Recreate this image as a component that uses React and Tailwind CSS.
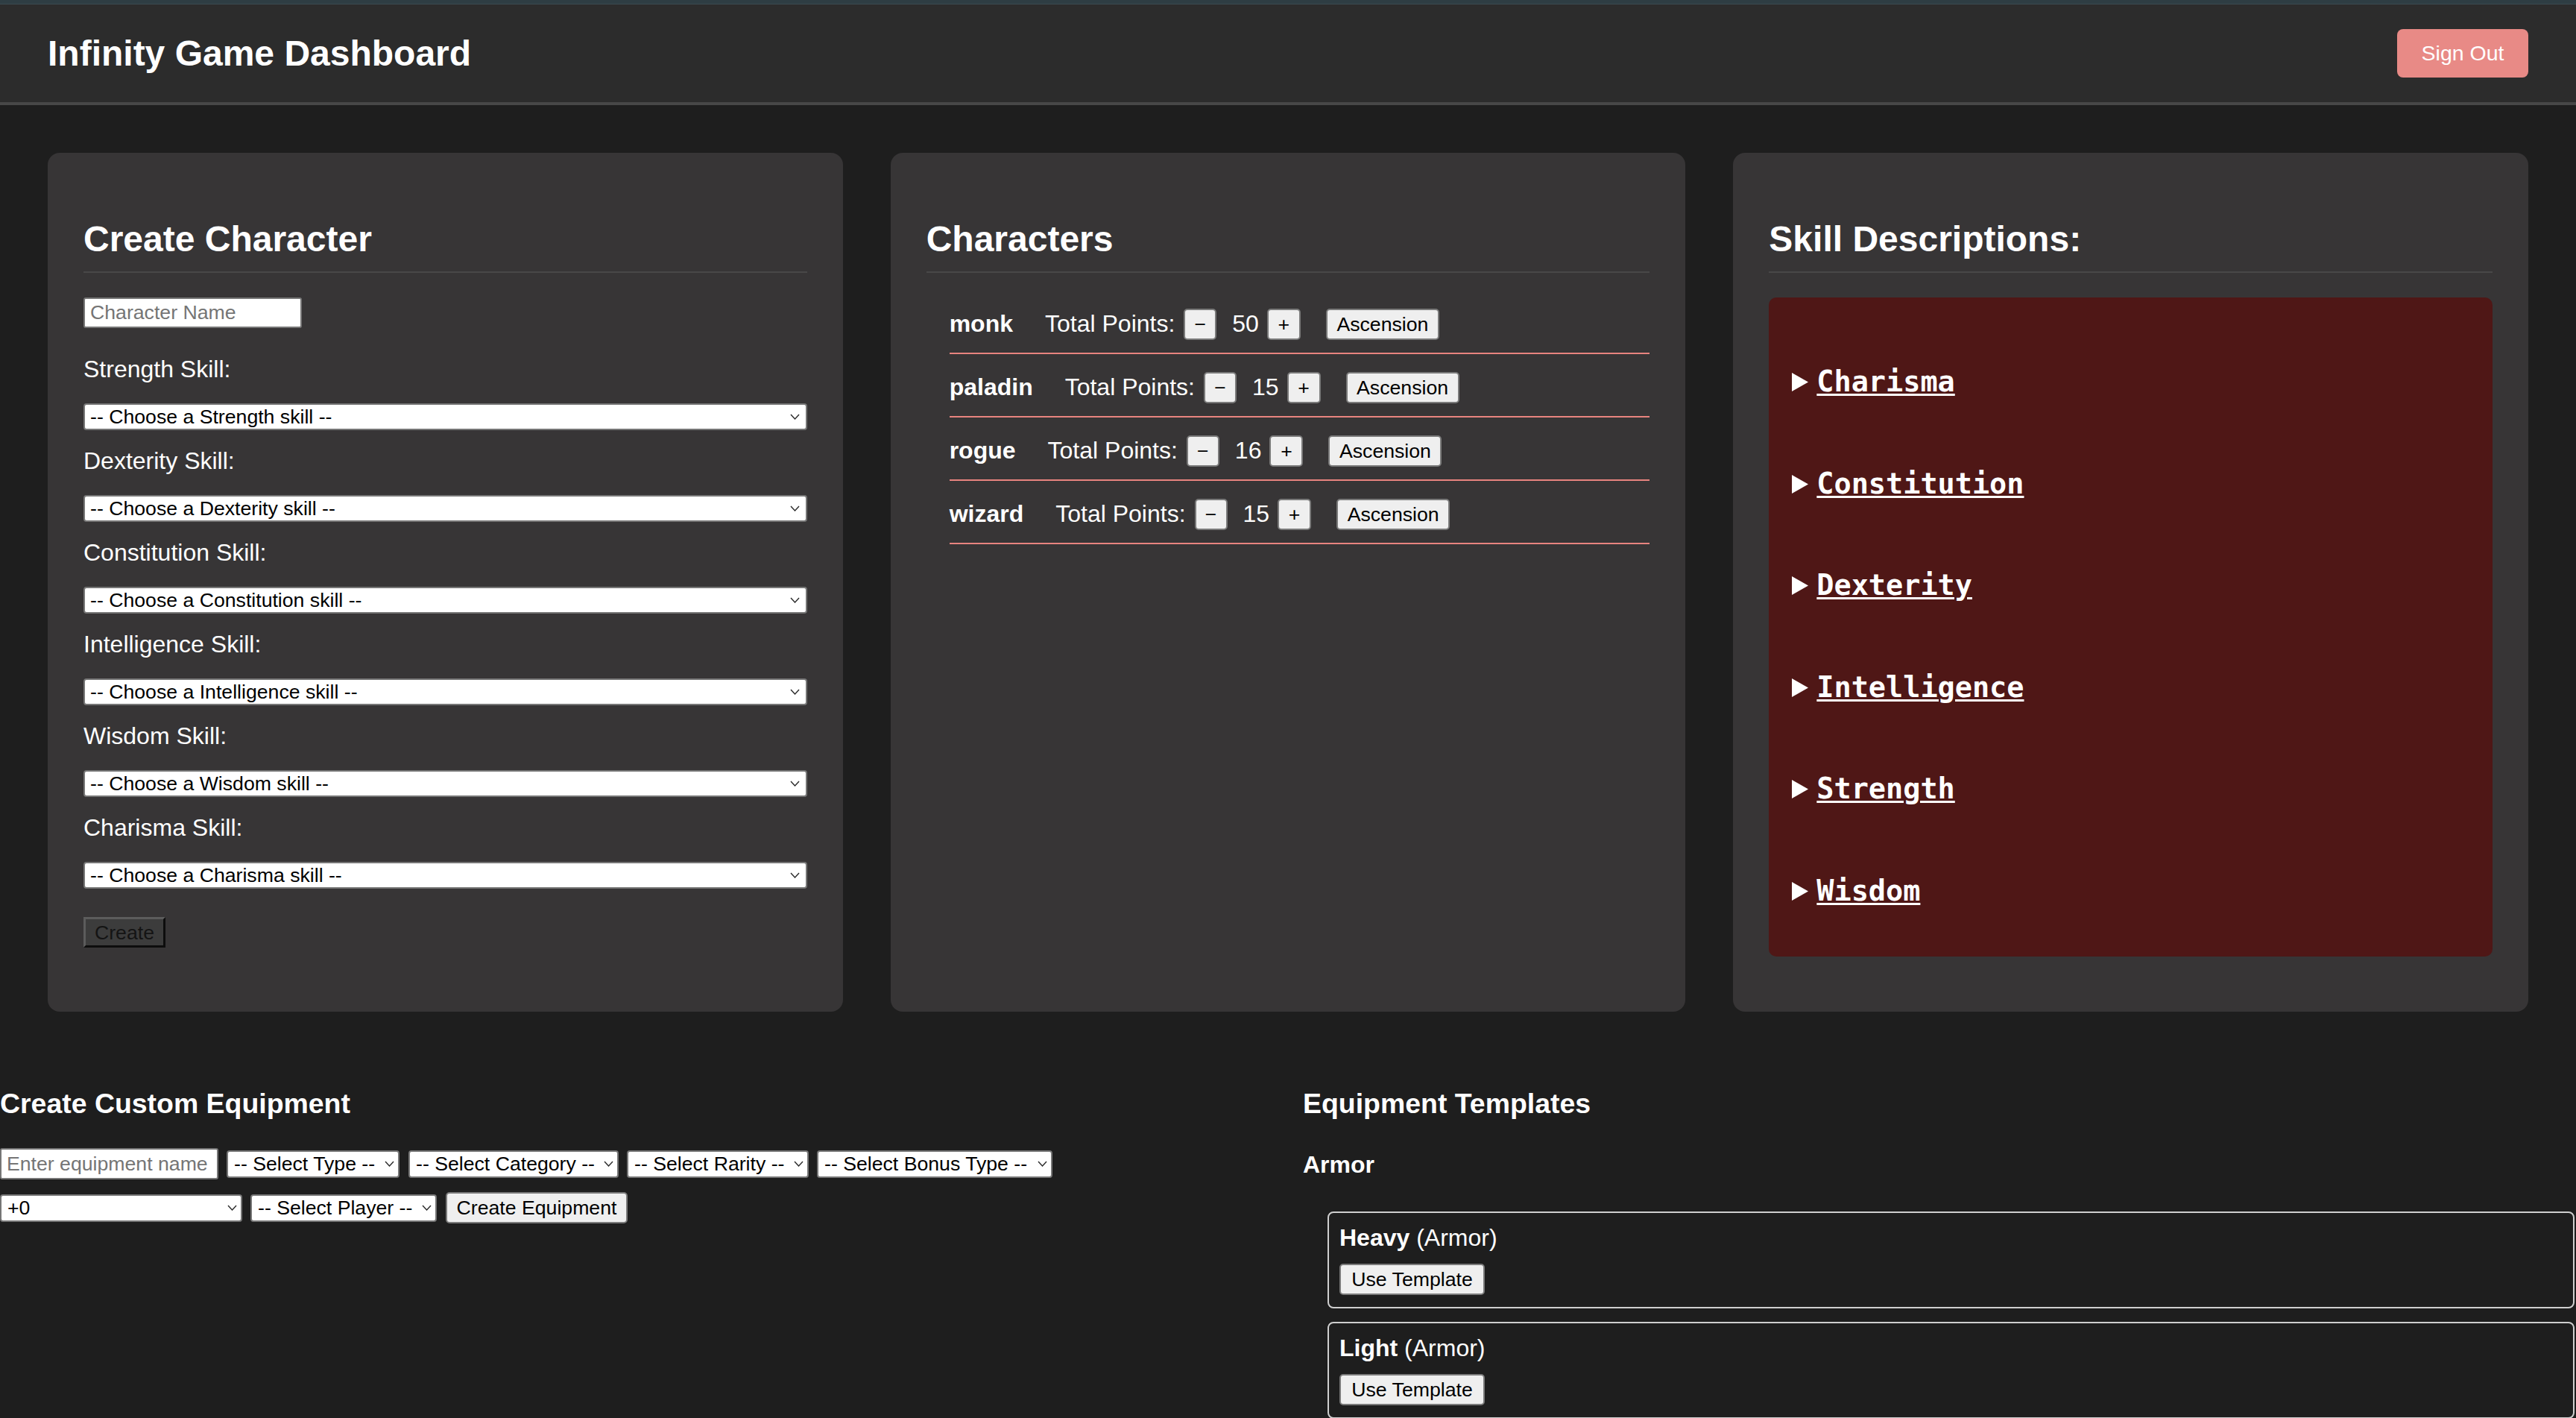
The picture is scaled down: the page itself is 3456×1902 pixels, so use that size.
import React from "react";

function Chevron({ pos }) {
  return (
    <svg
      className={"pointer-events-none absolute top-1/2 -translate-y-1/2 " + pos}
      width="13"
      height="8"
      viewBox="0 0 13 8"
      fill="none"
    >
      <path d="M1 1 L6.5 7 L12 1" stroke="#2a2a2a" strokeWidth="1.4" />
    </svg>
  );
}

function SkillSelect({ name }) {
  return (
    <div className="relative mt-[30px] h-[36px] w-full">
      <select
        defaultValue=""
        className="h-[36px] w-full appearance-none rounded-[4px] border-2 border-solid border-[#767676] bg-white py-0 pl-[7px] text-[26.67px] leading-[32px] text-black"
      >
        <option value="">{`-- Choose a ${name} skill --`}</option>
      </select>
      <Chevron pos="right-[10px]" />
    </div>
  );
}

function SmallSelect({ text, cls, chev }) {
  return (
    <div className={"relative h-[37px] shrink-0 " + cls}>
      <select
        defaultValue=""
        className="h-[37px] w-full appearance-none rounded-[4px] border-2 border-solid border-[#767676] bg-white py-0 pl-[8px] text-[26.67px] leading-[33px] text-black"
      >
        <option value="">{text}</option>
      </select>
      <Chevron pos={chev} />
    </div>
  );
}

function GrayButton({ children, cls }) {
  return (
    <button
      className={
        "flex shrink-0 items-center justify-center rounded-[5px] border-2 border-solid border-[#7a7a7a] bg-[#efefef] p-0 text-[26.67px] leading-[30px] text-black " +
        cls
      }
    >
      {children}
    </button>
  );
}

const characters = [
  { name: "monk", points: 50 },
  { name: "paladin", points: 15 },
  { name: "rogue", points: 16 },
  { name: "wizard", points: 15 },
];

const skills = ["Charisma", "Constitution", "Dexterity", "Intelligence", "Strength", "Wisdom"];

const skillLabels = ["Strength", "Dexterity", "Constitution", "Intelligence", "Wisdom", "Charisma"];

function CardTitle({ children }) {
  return (
    <h2 className="mt-[40px] border-b-2 border-solid border-[#484848] pb-[16px] text-[48px] font-bold leading-[55px] text-white">
      {children}
    </h2>
  );
}

export default function App() {
  return (
    <div className="min-h-screen bg-[#1e1e1e] font-['Liberation_Sans',Arial,sans-serif] text-white">
      <div className="h-[5px] bg-[#2e3d43]" />
      <div className="h-[1px] bg-[#3b4a50]" />
      <header className="flex h-[135px] items-center justify-between border-b-4 border-solid border-[#474747] bg-[#2c2c2c] px-[64px]">
        <h1 className="text-[48px] font-bold leading-[55px] text-white">Infinity Game Dashboard</h1>
        <button className="h-[65px] w-[176px] rounded-[8px] bg-[#e88a86] text-[28.5px] leading-[33px] text-white">
          Sign Out
        </button>
      </header>

      <main className="grid grid-cols-3 gap-[64px] px-[64px] pt-[64px] pb-[64px]">
        {/* Create Character */}
        <section className="min-h-[1152px] rounded-[16px] bg-[#373536] p-[48px]">
          <CardTitle>Create Character</CardTitle>
          <input
            placeholder="Character Name"
            className="mt-[33px] block h-[41px] w-[293px] rounded-[3px] border-2 border-solid border-[#767676] bg-white pl-[7px] text-[26.67px] text-black placeholder:text-[#757575]"
          />
          <div className="mt-[40px]">
            {skillLabels.map((s, i) => (
              <div key={s} className={i === 0 ? "" : "mt-[26px]"}>
                <label className="block text-[32px] leading-[31px] text-white">{s} Skill:</label>
                <SkillSelect name={s} />
              </div>
            ))}
          </div>
          <button className="mt-[38px] flex h-[41px] w-[110px] items-center justify-center border-[3px] border-solid border-t-[#5c5c5c] border-l-[#5c5c5c] border-r-[#0d0d0d] border-b-[#0d0d0d] bg-[#3c3c3c] text-[26.67px] text-[#141414]">
            Create
          </button>
        </section>

        {/* Characters */}
        <section className="min-h-[1152px] rounded-[16px] bg-[#373536] p-[48px]">
          <CardTitle>Characters</CardTitle>
          <ul className="mt-[24px] pl-[31px]">
            {characters.map((c) => (
              <li
                key={c.name}
                className="flex h-[85px] items-center border-b-2 border-solid border-[#e8847f] pt-[6px] text-[32px] leading-[37px] text-white"
              >
                <span className="font-bold">{c.name}</span>
                <span className="ml-[43px]">Total Points:</span>
                <GrayButton cls="ml-[12px] h-[42px] w-[44px]">−</GrayButton>
                <span className="ml-[21px]">{c.points}</span>
                <GrayButton cls="ml-[11px] h-[42px] w-[45px]">+</GrayButton>
                <GrayButton cls="ml-[34px] h-[42px] w-[152px]">Ascension</GrayButton>
              </li>
            ))}
          </ul>
        </section>

        {/* Skill Descriptions */}
        <section className="min-h-[1152px] rounded-[16px] bg-[#373536] p-[48px]">
          <CardTitle>Skill Descriptions:</CardTitle>
          <div className="mt-[33px] flex flex-col gap-[91.8px] rounded-[10px] bg-[#4f1716] pt-[91px] pb-[65px] pl-[31px]">
            {skills.map((s) => (
              <div key={s} className="flex items-baseline gap-[11px]">
                <svg width="22" height="25" viewBox="0 0 22 25" className="shrink-0">
                  <polygon points="0,0 22,12.5 0,25" fill="#ffffff" />
                </svg>
                <a
                  href="#"
                  className="font-['DejaVu_Sans_Mono',monospace] text-[38.5px] font-bold leading-[44.8px] text-white underline decoration-[3px] underline-offset-[3px]"
                >
                  {s}
                </a>
              </div>
            ))}
          </div>
        </section>
      </main>

      <div className="grid grid-cols-2 gap-[40px]">
        {/* Create Custom Equipment */}
        <section>
          <h3 className="mt-[38px] text-[37.44px] font-bold leading-[43px] text-white">Create Custom Equipment</h3>
          <div className="mt-[38px] flex items-center">
            <input
              placeholder="Enter equipment name"
              className="h-[42px] w-[293px] shrink-0 rounded-[3px] border-2 border-solid border-[#767676] bg-white pl-[7px] text-[26.67px] text-black placeholder:text-[#757575]"
            />
            <SmallSelect text="-- Select Type --" cls="ml-[11px] w-[232px]" chev="right-[7px]" />
            <SmallSelect text="-- Select Category --" cls="ml-[12px] w-[282px]" chev="right-[7px]" />
            <SmallSelect text="-- Select Rarity --" cls="ml-[11px] w-[244px]" chev="right-[7px]" />
            <SmallSelect text="-- Select Bonus Type --" cls="ml-[11px] w-[316px]" chev="right-[7px]" />
          </div>
          <div className="mt-[17px] flex items-center">
            <SmallSelect text="+0" cls="w-[325px]" chev="right-[7px]" />
            <SmallSelect text="-- Select Player --" cls="ml-[11px] w-[250px]" chev="right-[7px]" />
            <GrayButton cls="ml-[12px] h-[42px] w-[244px]">Create Equipment</GrayButton>
          </div>
        </section>

        {/* Equipment Templates */}
        <section>
          <h3 className="mt-[38px] text-[37.44px] font-bold leading-[43px] text-white">Equipment Templates</h3>
          <h4 className="mt-[42px] text-[32px] font-bold leading-[37px] text-white">Armor</h4>
          <div className="mt-[44px] mr-[2px] ml-[33px] rounded-[8px] border-2 border-solid border-[#cfcfcf] px-[14px] pt-[15px] pb-[16px]">
            <p className="text-[32px] leading-[37px] text-white">
              <strong className="font-bold">Heavy</strong> (Armor)
            </p>
            <GrayButton cls="mt-[16px] h-[42px] w-[195px]">Use Template</GrayButton>
          </div>
          <div className="mt-[18px] mr-[2px] ml-[33px] rounded-[8px] border-2 border-solid border-[#cfcfcf] px-[14px] pt-[15px] pb-[16px]">
            <p className="text-[32px] leading-[37px] text-white">
              <strong className="font-bold">Light</strong> (Armor)
            </p>
            <GrayButton cls="mt-[16px] h-[42px] w-[195px]">Use Template</GrayButton>
          </div>
        </section>
      </div>
    </div>
  );
}
